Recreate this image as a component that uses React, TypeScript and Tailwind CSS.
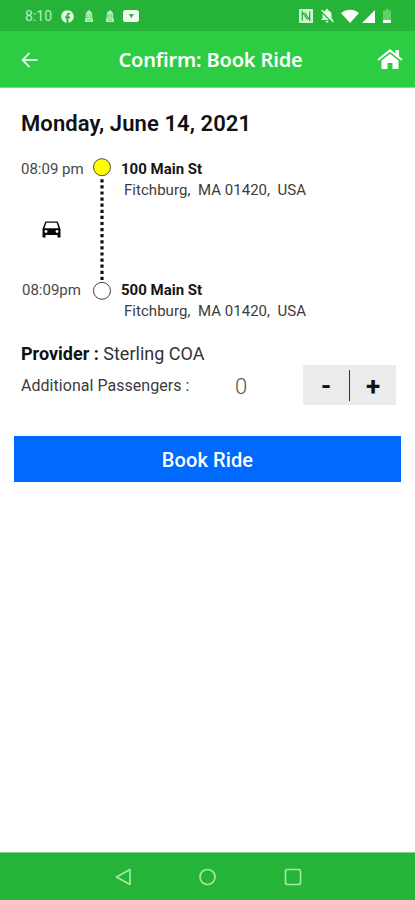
import { useState } from 'react'
import { FaFacebook } from 'react-icons/fa'

function StatusBar() {
  return (
    <div className="flex h-[31px] items-center justify-between bg-[#25b338] pt-px pr-[24px] pl-[25px] text-[#e6fae8]">
      <div className="flex items-center">
        <span className="w-9 text-[14px] leading-4 text-[#b9f2bd]">8:10</span>
        <FaFacebook className="h-[13px] w-[13px]" />
        <BellTower className="ml-[11px]" />
        <BellTower className="ml-[13px]" />
        <svg className="ml-[9px] h-[12px] w-[16px]" viewBox="0 0 16 12">
          <rect width="16" height="12" rx="2.500" fill="#f0fcf1" />
          <path d="M5.800 4h5L8.300 8Z" fill="#25b338" />
        </svg>
      </div>
      <div className="flex items-center">
        <svg className="h-[14px] w-[14px]" viewBox="0 0 14 14">
          <rect width="14" height="14" rx="1" fill="#d3f5d5" />
          <path d="M3.300 11.500V3l5 7.500M5.700 3.500l5 7.500V2.500" fill="none" stroke="#25b338" strokeWidth="1.300" />
        </svg>
        <svg className="ml-[7px] h-[14px] w-[14px]" viewBox="0 0 14 14">
          <path d="M7 0c.8 0 1.200.5 1.200 1.200C10.500 1.800 11.500 3.500 11.500 6v3l1.500 2H1l1.500-2V6c0-2.500 1-4.200 3.300-4.800C5.800.5 6.200 0 7 0ZM5.600 12h2.800c0 2-2.800 2-2.800 0Z" fill="#e6fae8" />
          <path d="M.5 2 13 14" stroke="#25b338" strokeWidth="1.400" />
          <path d="M1.500 1 13.500 13" stroke="#e6fae8" strokeWidth="1.200" />
        </svg>
        <svg className="ml-[7px] h-[14px] w-[18px]" viewBox="0 0 18 14" fill="#fff">
          <path d="M0 4C5-.5 13-.5 18 4L9 14Z" />
        </svg>
        <svg className="ml-[3px] h-[13px] w-[13px]" viewBox="0 0 13 13" fill="#fff">
          <path d="M13 0v13H0Z" />
        </svg>
        <svg className="ml-[8px] h-[14px] w-[8px]" viewBox="0 0 8 14">
          <path d="M2.500 0h3v1.500H8V14H0V1.500h2.500Z" fill="#62d16d" />
          <path d="M0 11h8v3H0Z" fill="#e6fae8" />
        </svg>
      </div>
    </div>
  )
}

function BellTower({ className }: { className: string }) {
  return (
    <svg className={`h-[12px] w-[8px] ${className}`} viewBox="0 0 8 12">
      <path d="M4 0C6.500 1.500 7.200 3 7.200 5v3.500H8V12H0V8.500h.8V5C.8 3 1.500 1.500 4 0Z" fill="#b4eeb8" />
      <path d="M2.800 4v4.500M5.200 4v4.500M2 10.200h4" stroke="#5bc966" strokeWidth="0.800" />
    </svg>
  )
}

function Header() {
  return (
    <header className="flex h-[57px] items-center border-b border-[#7fdc88] bg-[#2ccd42] pr-[12px] pl-[21px] text-white">
      <svg className="mt-px h-[16px] w-[17px]" viewBox="0 0 17 16" fill="none" stroke="#d9fadb" strokeWidth="1.900">
        <path d="M16.500 8H1.500M8.500 1 1.500 8l7 7" />
      </svg>
      <h1 className="flex-1 pt-[2px] pl-[6px] text-center font-['Noto_Sans'] text-[20px] leading-7 font-semibold tracking-[-0.17px] [font-variant-ligatures:common-ligatures]">
        Confirm: Book Ride
      </h1>
      <svg className="mt-px h-[21px] w-[26px]" viewBox="0 0 26 21">
        <path d="M1 11 13 1.500 25 11" fill="none" stroke="#fff" strokeWidth="2.200" />
        <path d="M18.500 1H22v7l-3.500-3ZM4.500 11.500 13 4.700l8.500 6.800V20h-6v-6h-5v6h-6Z" fill="#fff" />
      </svg>
    </header>
  )
}

function Stop({ street }: { street: string }) {
  return (
    <div className="h-[121px] text-[15px] leading-[21px]">
      <p className="font-bold text-[#161616]">{street}</p>
      <p className="pl-[3px] tracking-[0.04px] whitespace-pre text-[#3c3c3c]">Fitchburg,  MA 01420,  USA</p>
    </div>
  )
}

function Trip() {
  return (
    <div className="mt-[20px] flex h-[162px] pl-[21px]">
      <div className="flex w-[72px] flex-col text-[15px] leading-[21px] text-[#484848]">
        <span>08:09 pm</span>
        <svg className="mt-[41px] ml-[21px] h-[17px] w-[19px]" viewBox="0 0 19 17">
          <path d="M3.300.500h12.400L18.500 8v8.500h-3V14h-12v2.500h-3V8Z" fill="#080808" />
          <path d="M4.300 1.800h10.400l1.800 5.400h-14Z" fill="#fff" />
          <circle cx="4" cy="10.500" r="1.400" fill="#fff" />
          <circle cx="15" cy="10.500" r="1.400" fill="#fff" />
        </svg>
        <span className="mt-[42px] pl-[1px]">08:09pm</span>
      </div>
      <svg className="-mt-px h-[143px] w-[18px]" viewBox="0 0 18 143">
        <circle cx="9" cy="9.200" r="8.500" fill="#ffff00" stroke="#55552a" />
        <path d="M9 21.200V122" stroke="#111" strokeWidth="3.200" strokeDasharray="3.200 2.900" />
        <circle cx="9" cy="132.800" r="8.500" fill="#fff" stroke="#444" />
      </svg>
      <div className="pl-[10px]">
        <Stop street="100 Main St" />
        <Stop street="500 Main St" />
      </div>
    </div>
  )
}

function NavBar() {
  return (
    <nav className="flex h-12 items-center border-t border-[#7dd887] bg-[#25b338] pl-[115px]">
      <svg className="h-[18px] w-[187px]" viewBox="0 0 187 18" fill="none" stroke="#a0eca5" strokeWidth="1.700">
        <path d="M15 1.500v15L1.500 9Z" strokeLinejoin="round" />
        <circle cx="92.500" cy="9" r="7.500" />
        <rect x="170.500" y="1.500" width="15" height="15" rx="2" />
      </svg>
    </nav>
  )
}

export default function App() {
  const [passengers, setPassengers] = useState(0)

  return (
    <div className="flex h-[900px] w-[415px] flex-col bg-white font-['Roboto',sans-serif]">
      <StatusBar />
      <Header />
      <main className="flex-1">
        <h2 className="mt-[21px] pl-[21px] text-[22px] leading-[30px] font-semibold tracking-[0.09px] text-[#111]">
          Monday, June 14, 2021
        </h2>
        <Trip />
        <p className="mt-[21px] pl-[21px] text-[18px] leading-6 text-[#333]">
          <span className="font-bold text-[#111]">Provider :</span> Sterling COA
        </p>
        <div className="-mt-px flex h-10 items-center pl-[21px]">
          <span className="w-[214px] pt-[2px] text-[16px] tracking-[0.04px] text-[#3c3c3c]">Additional Passengers :</span>
          <span className="w-[68px] pt-[2px] text-[22px] font-light text-[#555]">{passengers}</span>
          <div className="flex h-10 w-[93px] items-center bg-[#ebebeb] text-[26px] font-bold text-[#111]">
            <button className="w-[46px] pt-px leading-10" onClick={() => setPassengers(Math.max(0, passengers - 1))}>-</button>
            <span className="h-[31px] w-px bg-[#333]" />
            <button className="flex-1 pt-px leading-10" onClick={() => setPassengers(passengers + 1)}>+</button>
          </div>
        </div>
        <button className="mt-[31px] ml-[14px] h-[46px] w-[387px] bg-[#0069ff] pt-px text-[20px] font-medium tracking-[0.1px] text-white">
          Book Ride
        </button>
      </main>
      <NavBar />
    </div>
  )
}
